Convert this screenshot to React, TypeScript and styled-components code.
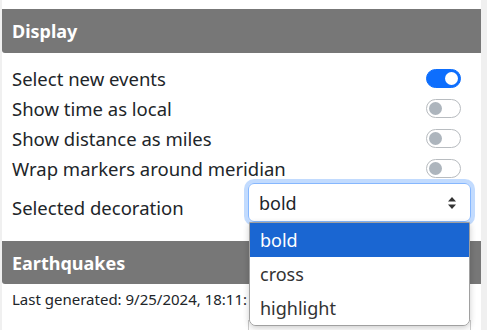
import React from "react";
import styled, { createGlobalStyle } from "styled-components";

const Global = createGlobalStyle`
  html, body { margin: 0; padding: 0; background: #f0f0f0; }
  body { font-family: "Noto Sans", "Open Sans", sans-serif; color: #212529; }
`;

const Page = styled.div`
  position: relative;
  margin-left: 2px;
  width: 479px;
  height: 330px;
  background: #fff;
  overflow: hidden;
  padding-top: 9px;
  box-sizing: border-box;
`;

const SectionHeader = styled.div<{ $h: number }>`
  height: ${(p) => p.$h}px;
  background: #777;
  color: #fff;
  font-weight: 700;
  font-size: 18px;
  display: flex;
  align-items: center;
  padding-left: 10px;
  border-radius: 0 0 0 3px;
`;

const Body = styled.div`
  padding: 10px 10px 19px 10px;
  display: flex;
  flex-direction: column;
`;

const Row = styled.div`
  height: 30px;
  display: flex;
  align-items: center;
  justify-content: space-between;
  font-size: 18.5px;
  padding-right: 10px;
`;

const Toggle = styled.div<{ $on?: boolean }>`
  position: relative;
  width: 35px;
  height: 19px;
  box-sizing: border-box;
  border-radius: 10px;
  background: ${(p) => (p.$on ? "#0d6efd" : "#fff")};
  border: 1px solid ${(p) => (p.$on ? "#0d6efd" : "#b8bcc0")};
  &::after {
    content: "";
    position: absolute;
    top: 2px;
    ${(p) => (p.$on ? "right: 2px;" : "left: 2px;")}
    width: 13px;
    height: 13px;
    border-radius: 50%;
    background: ${(p) => (p.$on ? "#fff" : "#adb5bd")};
  }
`;

const SelectRow = styled.div`
  display: flex;
  align-items: flex-end;
  justify-content: space-between;
  font-size: 18.5px;
  height: 39px;
`;

const SelectLabel = styled.div`
  padding-bottom: 2px;
`;

const SelectBox = styled.div`
  width: 223px;
  height: 39px;
  box-sizing: border-box;
  border: 1px solid #86b7fe;
  border-radius: 6px;
  box-shadow: 0 0 0 4px rgba(13, 110, 253, 0.25);
  display: flex;
  align-items: center;
  justify-content: space-between;
  padding: 0 13px 0 10px;
  font-size: 18px;
  color: #212529;
`;

const Updated = styled.div`
  font-size: 15px;
  padding: 5px 0 5px 10px;
  width: 235px;
  white-space: nowrap;
  overflow: hidden;
`;

const ListBox = styled.div`
  position: absolute;
  left: 247px;
  top: 222px;
  width: 221px;
  height: 104px;
  box-sizing: border-box;
  background: #fff;
  border: 1px solid #a0a0a0;
  border-radius: 0 0 7px 7px;
  box-shadow: 0 2px 6px rgba(0, 0, 0, 0.2);
  overflow: hidden;
  display: flex;
  flex-direction: column;
`;

const Option = styled.div<{ $active?: boolean }>`
  height: 34px;
  display: flex;
  align-items: center;
  padding-left: 10px;
  font-size: 18px;
  background: ${(p) => (p.$active ? "#1a66d2" : "#fff")};
  color: ${(p) => (p.$active ? "#fff" : "#333")};
`;

const Below = styled.div`
  position: absolute;
  left: 246px;
  top: 320px;
  width: 223px;
  height: 20px;
  border: 1px solid #ccc;
  box-sizing: border-box;
`;

const Arrows = () => (
  <svg width="10" height="14" viewBox="0 0 10 14">
    <path d="M5 1 L9 5.5 L1 5.5 Z" fill="#333" />
    <path d="M5 13 L9 8.5 L1 8.5 Z" fill="#333" />
  </svg>
);

const toggles: [string, boolean][] = [
  ["Select new events", true],
  ["Show time as local", false],
  ["Show distance as miles", false],
  ["Wrap markers around meridian", false],
];

export default function App() {
  return (
    <>
      <Global />
      <Page>
        <SectionHeader $h={44}>Display</SectionHeader>
        <Body>
          {toggles.map(([label, on]) => (
            <Row key={label}>
              <span>{label}</span>
              <Toggle $on={on} />
            </Row>
          ))}
          <SelectRow>
            <SelectLabel>Selected decoration</SelectLabel>
            <SelectBox>
              <span>bold</span>
              <Arrows />
            </SelectBox>
          </SelectRow>
        </Body>
        <SectionHeader $h={43}>Earthquakes</SectionHeader>
        <Updated>Last generated: 9/25/2024, 18:11:42</Updated>
        <Below />
        <ListBox>
          <Option $active>bold</Option>
          <Option>cross</Option>
          <Option>highlight</Option>
        </ListBox>
      </Page>
    </>
  );
}
